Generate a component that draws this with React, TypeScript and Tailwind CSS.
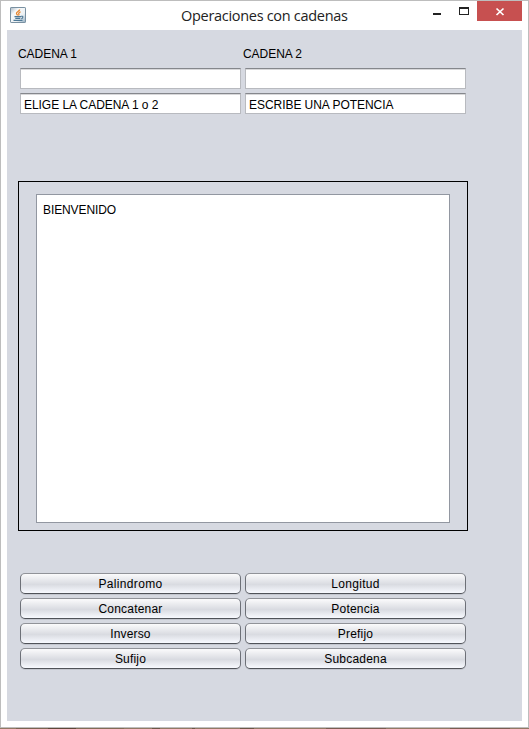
const buttons: [string, string][] = [
  ["Palindromo", "tracking-[0.33px]"],
  ["Longitud", "tracking-[0.3px]"],
  ["Concatenar", "tracking-[0.2px]"],
  ["Potencia", "tracking-[0.2px]"],
  ["Inverso", "tracking-[0.15px]"],
  ["Prefijo", "tracking-[0.2px]"],
  ["Sufijo", "tracking-[0.2px]"],
  ["Subcadena", "tracking-[0.2px]"],
];

function JavaIcon() {
  return (
    <svg width="16" height="16" viewBox="0 0 16 16" className="block">
      <defs>
        <linearGradient id="tile" x1="0" y1="0" x2="1" y2="1">
          <stop offset="0" stopColor="#a9b7c3" />
          <stop offset=".3" stopColor="#f6f8f9" />
          <stop offset=".65" stopColor="#eef2f4" />
          <stop offset="1" stopColor="#8fabbf" />
        </linearGradient>
      </defs>
      <rect x=".5" y=".5" width="15" height="15" rx=".6" fill="url(#tile)" stroke="#7990a1" />
      <path d="M9.600 2.500C9.800 4.200 6.200 4.800 6.500 6.500c.1.900.9 1.300 1.200 1.900M10.600 4.900C9.200 5.400 8.200 6.200 8.900 7.200c.3.500 0 .9-.4 1.200" fill="none" stroke="#e8862e" strokeWidth="1.300" />
      <path d="M4.500 9.600h6.500M5.300 11.400h5M3.500 13.400h9M11 9.300c2.600-.7 2.300 1.900.3 2.300" fill="none" stroke="#4d7896" strokeWidth="1.100" />
    </svg>
  );
}

function Field({ value = "" }: { value?: string }) {
  return (
    <input
      readOnly
      value={value}
      className="block h-[21px] w-[221px] border border-[#b8babf] border-t-[#85878c] bg-white px-[3px] pt-[2px] text-[12px] leading-[17px] tracking-[-0.05px] text-black shadow-[inset_0_1px_0_#d8d8da] outline-none"
    />
  );
}

export default function App() {
  return (
    <div className="h-[729px] w-[529px] font-['Liberation_Sans',Arial,sans-serif] text-[12px] text-black">
      <div className="flex h-[728px] flex-col border border-[#bdbdbd] bg-white px-[6px] pb-[6px]">
        <header className="flex h-[29px] shrink-0 items-start">
          <div className="w-[113px] pt-[6px] pl-[3px]">
            <JavaIcon />
          </div>
          <h1 className="flex-1 pt-[5px] pl-[61px] font-['Open_Sans',sans-serif] text-[14.5px] leading-[20px] font-normal tracking-[-0.3px] whitespace-nowrap text-[#222]">
            Operaciones con cadenas
          </h1>
          <svg width="90" height="20" viewBox="432 1 90 20" shapeRendering="crispEdges" className="shrink-0">
            <path fill="#222" d="M433 13h8v2h-8z" />
            <path fill="#222" fillRule="evenodd" d="M459 7h10v8h-10zM460 9v5h8V9z" />
            <path fill="#c75050" d="M477 1h45v20h-45z" />
            <path d="M496.500 8.500l7 6.500M503.500 8.500l-7 6.500" stroke="#fff" strokeWidth="1.700" shapeRendering="auto" />
          </svg>
        </header>
        <main className="flex-1 bg-[#d6d9e1] pl-[11px]">
          <div className="flex pt-[16px] leading-[16px] tracking-[-0.05px]">
            <label className="w-[225px]">CADENA 1</label>
            <label>CADENA 2</label>
          </div>
          <div className="mt-[6px] ml-[2px] grid w-[446px] grid-cols-2 gap-1">
            <Field />
            <Field />
            <Field value="ELIGE LA CADENA 1 o 2" />
            <Field value="ESCRIBE UNA POTENCIA" />
          </div>
          <section className="mt-[67px] h-[350px] w-[450px] border border-black px-[17px] pt-[12px]">
            <textarea
              readOnly
              value="BIENVENIDO"
              className="block h-[329px] w-[414px] resize-none border border-[#9297a1] bg-white px-[6px] py-[7px] text-[12px] leading-[16px] tracking-[-0.1px] outline-none"
            />
          </section>
          <div className="mt-[42px] ml-[2px] grid w-[446px] grid-cols-2 gap-1">
            {buttons.map(([name, spacing]) => (
              <button
                key={name}
                className="h-[21px] w-[221px] rounded-[5px] border border-[#6d7077] border-t-[#919399] border-b-[#505359] bg-linear-to-b from-[#fbfbfc] via-[#d9dbe1] via-55% to-[#f8faff] text-center text-[12px] leading-[18px] shadow-[0_1px_0_#c3c6ce]"
              >
                <span className={spacing}>{name}</span>
              </button>
            ))}
          </div>
        </main>
      </div>
      <div className="flex h-px bg-[#937864]">
        <div className="ml-[16px] w-[32px] bg-[#7b6250]" />
        <div className="w-[28px] bg-[#5e4638]" />
        <div className="w-[48px] bg-[#836b56]" />
        <div className="ml-[28px] w-[8px] bg-[#6d5646]" />
        <div className="ml-[32px] w-[3px] bg-[#6d5646]" />
        <div className="ml-[45px] w-[14px] bg-[#6d5646]" />
        <div className="ml-[72px] w-[60px] bg-[#7a5c50]" />
        <div className="ml-[64px] w-[60px] bg-[#7a5c50]" />
      </div>
    </div>
  );
}
